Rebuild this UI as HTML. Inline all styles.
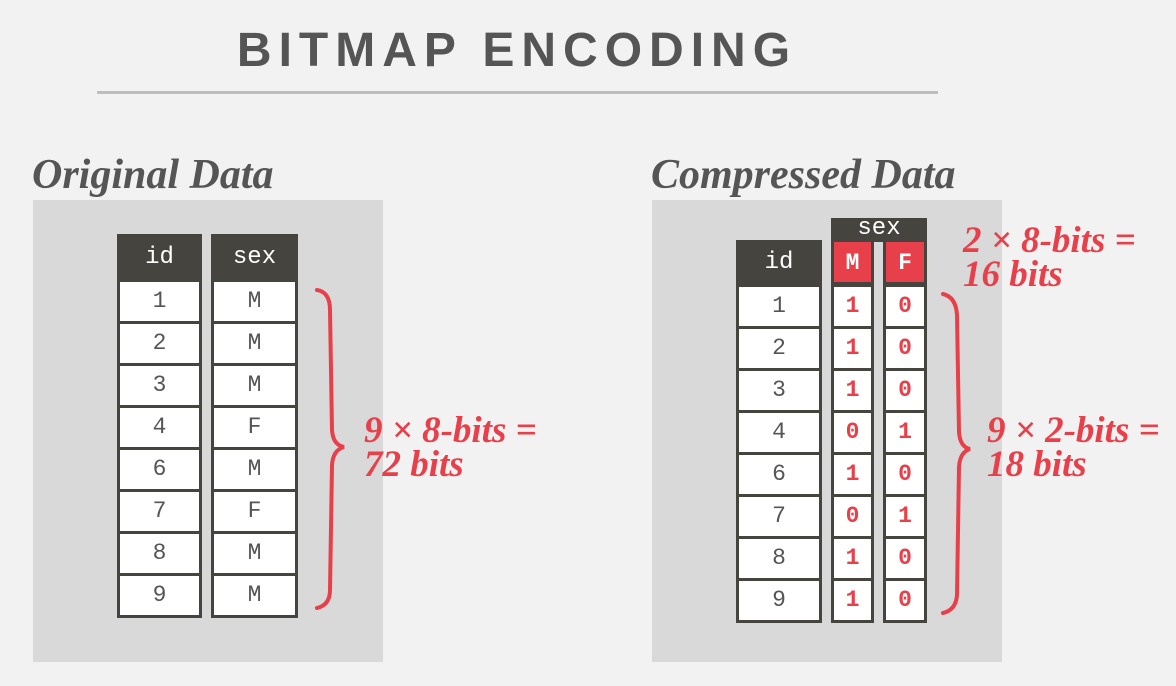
<!DOCTYPE html>
<html><head><meta charset="utf-8"><style>
*{margin:0;padding:0;box-sizing:border-box}
body{width:1176px;height:686px;background:#f2f2f2;position:relative;overflow:hidden;font-family:"Liberation Sans",sans-serif}
.a{position:absolute}
.title{left:0;width:1034px;top:22px;text-align:center;font-size:48px;font-weight:bold;color:#555;letter-spacing:7px;line-height:58px}
.sub{font-family:"Liberation Serif",serif;font-style:italic;font-weight:bold;font-size:42px;color:#555;line-height:40px}
.box{background:#d9d9d9}
.col{background:#46443f}
.c{position:absolute;background:#fff;text-align:center;font-family:"Liberation Mono",monospace;font-size:23px;color:#555;line-height:39px;height:39px}
.h{position:absolute;text-align:center;font-family:"Liberation Mono",monospace;font-size:24px;color:#fff}
.r{color:#e8404a;font-weight:bold}
.red{font-family:"Liberation Serif",serif;font-style:italic;font-weight:bold;font-size:37px;color:#e8404a;line-height:34px;white-space:nowrap}
</style></head><body>
<div class="a title">BITMAP ENCODING</div>
<div class="a" style="left:97px;top:91px;width:841px;height:3px;background:#bdbdbd"></div>
<div class="a sub" style="left:32px;top:155px">Original Data</div>
<div class="a sub" style="left:651px;top:155px">Compressed Data</div>
<div class="a box" style="left:33px;top:200px;width:350px;height:462px"></div>
<div class="a box" style="left:652px;top:200px;width:350px;height:462px"></div>

<div class="a col" style="left:117px;top:234px;width:85px;height:384px">
<div class="h" style="left:0;width:85px;top:10px">id</div>
<div class="c" style="left:3px;width:79px;top:48px">1</div>
<div class="c" style="left:3px;width:79px;top:90px">2</div>
<div class="c" style="left:3px;width:79px;top:132px">3</div>
<div class="c" style="left:3px;width:79px;top:174px">4</div>
<div class="c" style="left:3px;width:79px;top:216px">6</div>
<div class="c" style="left:3px;width:79px;top:258px">7</div>
<div class="c" style="left:3px;width:79px;top:300px">8</div>
<div class="c" style="left:3px;width:79px;top:342px">9</div>
</div>
<div class="a col" style="left:211px;top:234px;width:87px;height:384px">
<div class="h" style="left:0;width:87px;top:10px">sex</div>
<div class="c" style="left:3px;width:81px;top:48px">M</div>
<div class="c" style="left:3px;width:81px;top:90px">M</div>
<div class="c" style="left:3px;width:81px;top:132px">M</div>
<div class="c" style="left:3px;width:81px;top:174px">F</div>
<div class="c" style="left:3px;width:81px;top:216px">M</div>
<div class="c" style="left:3px;width:81px;top:258px">F</div>
<div class="c" style="left:3px;width:81px;top:300px">M</div>
<div class="c" style="left:3px;width:81px;top:342px">M</div>
</div>

<div class="a col" style="left:736px;top:240px;width:86px;height:383px">
<div class="h" style="left:0;width:86px;top:9px">id</div>
<div class="c" style="left:3px;width:80px;top:47px">1</div>
<div class="c" style="left:3px;width:80px;top:89px">2</div>
<div class="c" style="left:3px;width:80px;top:131px">3</div>
<div class="c" style="left:3px;width:80px;top:173px">4</div>
<div class="c" style="left:3px;width:80px;top:215px">6</div>
<div class="c" style="left:3px;width:80px;top:257px">7</div>
<div class="c" style="left:3px;width:80px;top:299px">8</div>
<div class="c" style="left:3px;width:80px;top:341px">9</div>
</div>
<div class="a col" style="left:831px;top:218px;width:96px;height:24px">
<div class="h" style="left:0;width:96px;top:-3px">sex</div></div>
<div class="a col" style="left:831px;top:240px;width:43px;height:383px">
<div class="c r" style="left:3px;width:37px;top:2px;background:#e8404a;color:#fff;height:40px;line-height:42px">M</div>
<div class="c r" style="left:3px;width:37px;top:47px">1</div>
<div class="c r" style="left:3px;width:37px;top:89px">1</div>
<div class="c r" style="left:3px;width:37px;top:131px">1</div>
<div class="c r" style="left:3px;width:37px;top:173px">0</div>
<div class="c r" style="left:3px;width:37px;top:215px">1</div>
<div class="c r" style="left:3px;width:37px;top:257px">0</div>
<div class="c r" style="left:3px;width:37px;top:299px">1</div>
<div class="c r" style="left:3px;width:37px;top:341px">1</div>
</div>
<div class="a col" style="left:883px;top:240px;width:44px;height:383px">
<div class="c r" style="left:3px;width:38px;top:2px;background:#e8404a;color:#fff;height:40px;line-height:42px">F</div>
<div class="c r" style="left:3px;width:38px;top:47px">0</div>
<div class="c r" style="left:3px;width:38px;top:89px">0</div>
<div class="c r" style="left:3px;width:38px;top:131px">0</div>
<div class="c r" style="left:3px;width:38px;top:173px">1</div>
<div class="c r" style="left:3px;width:38px;top:215px">0</div>
<div class="c r" style="left:3px;width:38px;top:257px">1</div>
<div class="c r" style="left:3px;width:38px;top:299px">0</div>
<div class="c r" style="left:3px;width:38px;top:341px">0</div>
</div>

<svg class="a" style="left:0;top:0" width="1176" height="686">
<path d="M317 290 Q330 292 330 310 L332 430 Q333 445 344 447 Q333 450 332 465 L330 590 Q330 605 317 608" fill="none" stroke="#e8404a" stroke-width="4" stroke-linecap="round"/>
<path d="M943 294 Q956 297 957 315 L959 432 Q960 447 970 449 Q960 452 959 467 L957 595 Q956 610 943 613" fill="none" stroke="#e8404a" stroke-width="4" stroke-linecap="round"/>
</svg>

<div class="a red" style="left:364px;top:414px">9 × 8-bits =<br>72 bits</div>
<div class="a red" style="left:963px;top:224px">2 × 8-bits =<br>16 bits</div>
<div class="a red" style="left:987px;top:414px">9 × 2-bits =<br>18 bits</div>
</body></html>
